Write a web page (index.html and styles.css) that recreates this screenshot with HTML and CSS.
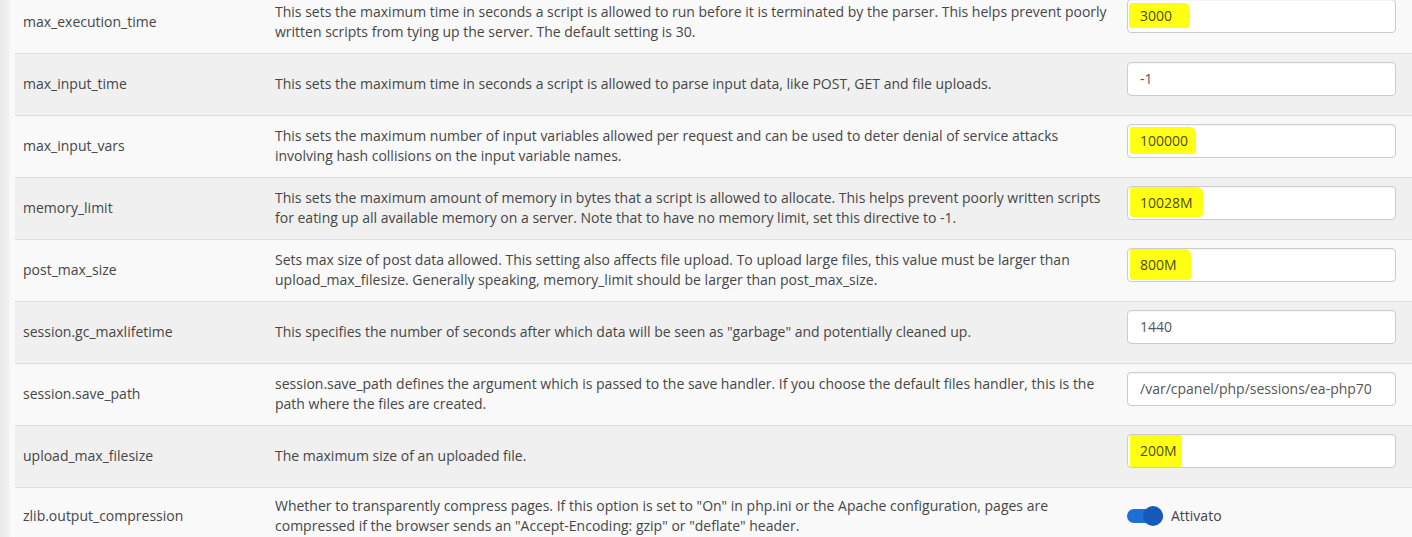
FILE: index.html
```html
<!DOCTYPE html>
<html lang="en">
<head>
  <meta charset="UTF-8" />
  <title>PHP Options</title>
  <link rel="stylesheet" href="styles.css">
</head>
<body>
  <div class="page">
    <div class="side-shade"></div>
    <div class="content">
      <table class="ini-table">
        <tbody>
          <tr>
            <td class="name">max_execution_time</td>
            <td class="desc">This sets the maximum time in seconds a script is allowed to run before it is terminated by the parser. This helps prevent poorly written scripts from tying up the server. The default setting is 30.</td>
            <td class="value"><div class="field"><span class="hl hl-a">3000</span></div></td>
          </tr>
          <tr>
            <td class="name">max_input_time</td>
            <td class="desc">This sets the maximum time in seconds a script is allowed to parse input data, like POST, GET and file uploads.</td>
            <td class="value"><div class="field">-1</div></td>
          </tr>
          <tr>
            <td class="name">max_input_vars</td>
            <td class="desc">This sets the maximum number of input variables allowed per request and can be used to deter denial of service attacks involving hash collisions on the input variable names.</td>
            <td class="value"><div class="field"><span class="hl hl-b">100000</span></div></td>
          </tr>
          <tr>
            <td class="name">memory_limit</td>
            <td class="desc">This sets the maximum amount of memory in bytes that a script is allowed to allocate. This helps prevent poorly written scripts for eating up all available memory on a server. Note that to have no memory limit, set this directive to -1.</td>
            <td class="value"><div class="field"><span class="hl hl-c">10028M</span></div></td>
          </tr>
          <tr>
            <td class="name">post_max_size</td>
            <td class="desc">Sets max size of post data allowed. This setting also affects file upload. To upload large files, this value must be larger than upload_max_filesize. Generally speaking, memory_limit should be larger than post_max_size.</td>
            <td class="value"><div class="field"><span class="hl hl-d">800M</span></div></td>
          </tr>
          <tr>
            <td class="name">session.gc_maxlifetime</td>
            <td class="desc">This specifies the number of seconds after which data will be seen as "garbage" and potentially cleaned up.</td>
            <td class="value"><div class="field">1440</div></td>
          </tr>
          <tr>
            <td class="name">session.save_path</td>
            <td class="desc">session.save_path defines the argument which is passed to the save handler. If you choose the default files handler, this is the path where the files are created.</td>
            <td class="value"><div class="field">/var/cpanel/php/sessions/ea-php70</div></td>
          </tr>
          <tr>
            <td class="name">upload_max_filesize</td>
            <td class="desc">The maximum size of an uploaded file.</td>
            <td class="value"><div class="field"><span class="hl hl-e">200M</span></div></td>
          </tr>
          <tr class="row-toggle">
            <td class="name">zlib.output_compression</td>
            <td class="desc">Whether to transparently compress pages. If this option is set to "On" in php.ini or the Apache configuration, pages are compressed if the browser sends an "Accept-Encoding: gzip" or "deflate" header.</td>
            <td class="value toggle-cell">
              <div class="toggle">
                <span class="switch"><span class="knob"></span></span>
                <span class="toggle-label">Attivato</span>
              </div>
            </td>
          </tr>
        </tbody>
      </table>
    </div>
  </div>
</body>
</html>
```

FILE: styles.css
```css
body {
  margin: 0;
  background: #fff;
  font-family: 'Open Sans', 'Liberation Sans', sans-serif;
  font-size: 14px;
  line-height: 20px;
  color: #464646;
  overflow: hidden;
}

.page {
  display: flex;
  height: 537px;
  overflow: hidden;
}

.side-shade {
  width: 15px;
  flex: none;
  background: linear-gradient(to right, #e9e9e9 0, #efefef 8px, #f8f8f8 10px, #fafafa 15px);
}

.content {
  flex: 1;
}

.ini-table {
  width: 100%;
  border-collapse: collapse;
  margin-top: -9px;
  table-layout: fixed;
}

.ini-table tr {
  height: 62px;
  background: #f9f9f9;
}

.ini-table tr:nth-child(even) {
  background: #f0f0f0;
}

.ini-table tr.row-toggle {
  height: 58px;
}

.ini-table td {
  border-top: 1px solid #dedede;
  padding: 0 8px;
  vertical-align: middle;
}

.ini-table tr:first-child td {
  border-top: none;
}

.name {
  width: 236px;
}

.value {
  width: 269px;
}

.ini-table td.value {
  vertical-align: top;
  padding: 8px 16px 0 8px;
}

.ini-table td.toggle-cell {
  vertical-align: middle;
  padding-top: 0;
}

.field {
  height: 32px;
  border: 1px solid #ccc;
  border-radius: 4px;
  background: #fff;
  padding: 0 12px;
  line-height: 32px;
  color: #555;
  white-space: nowrap;
  overflow: hidden;
  box-shadow: inset 0 1px 1px rgba(0, 0, 0, 0.04);
}

/* marker highlights drawn over the values */
.hl {
  background: #ffff14;
  margin-left: -11px;
  padding: 3px 10px 3px 11px;
  color: #4d4a26;
  border-radius: 2px 6px 4px 3px;
}

.hl-a { padding-right: 18px; }
.hl-b { padding: 4px 8px 4px 10px; margin-left: -10px; }
.hl-c { padding: 6px 10px 5px 10px; margin-left: -10px; }
.hl-d { padding: 6px 14px 6px 10px; margin-left: -10px; }
.hl-e { padding: 8px 5px 8px 10px; margin-left: -10px; }

.toggle {
  display: flex;
  align-items: center;
  gap: 8px;
}

.switch {
  position: relative;
  width: 36px;
  height: 14px;
  border-radius: 7px;
  background: #1d6fd6;
}

.knob {
  position: absolute;
  right: 0;
  top: -3px;
  width: 20px;
  height: 20px;
  border-radius: 50%;
  background: #1659b9;
}

.toggle-label {
  color: #444;
}
```
